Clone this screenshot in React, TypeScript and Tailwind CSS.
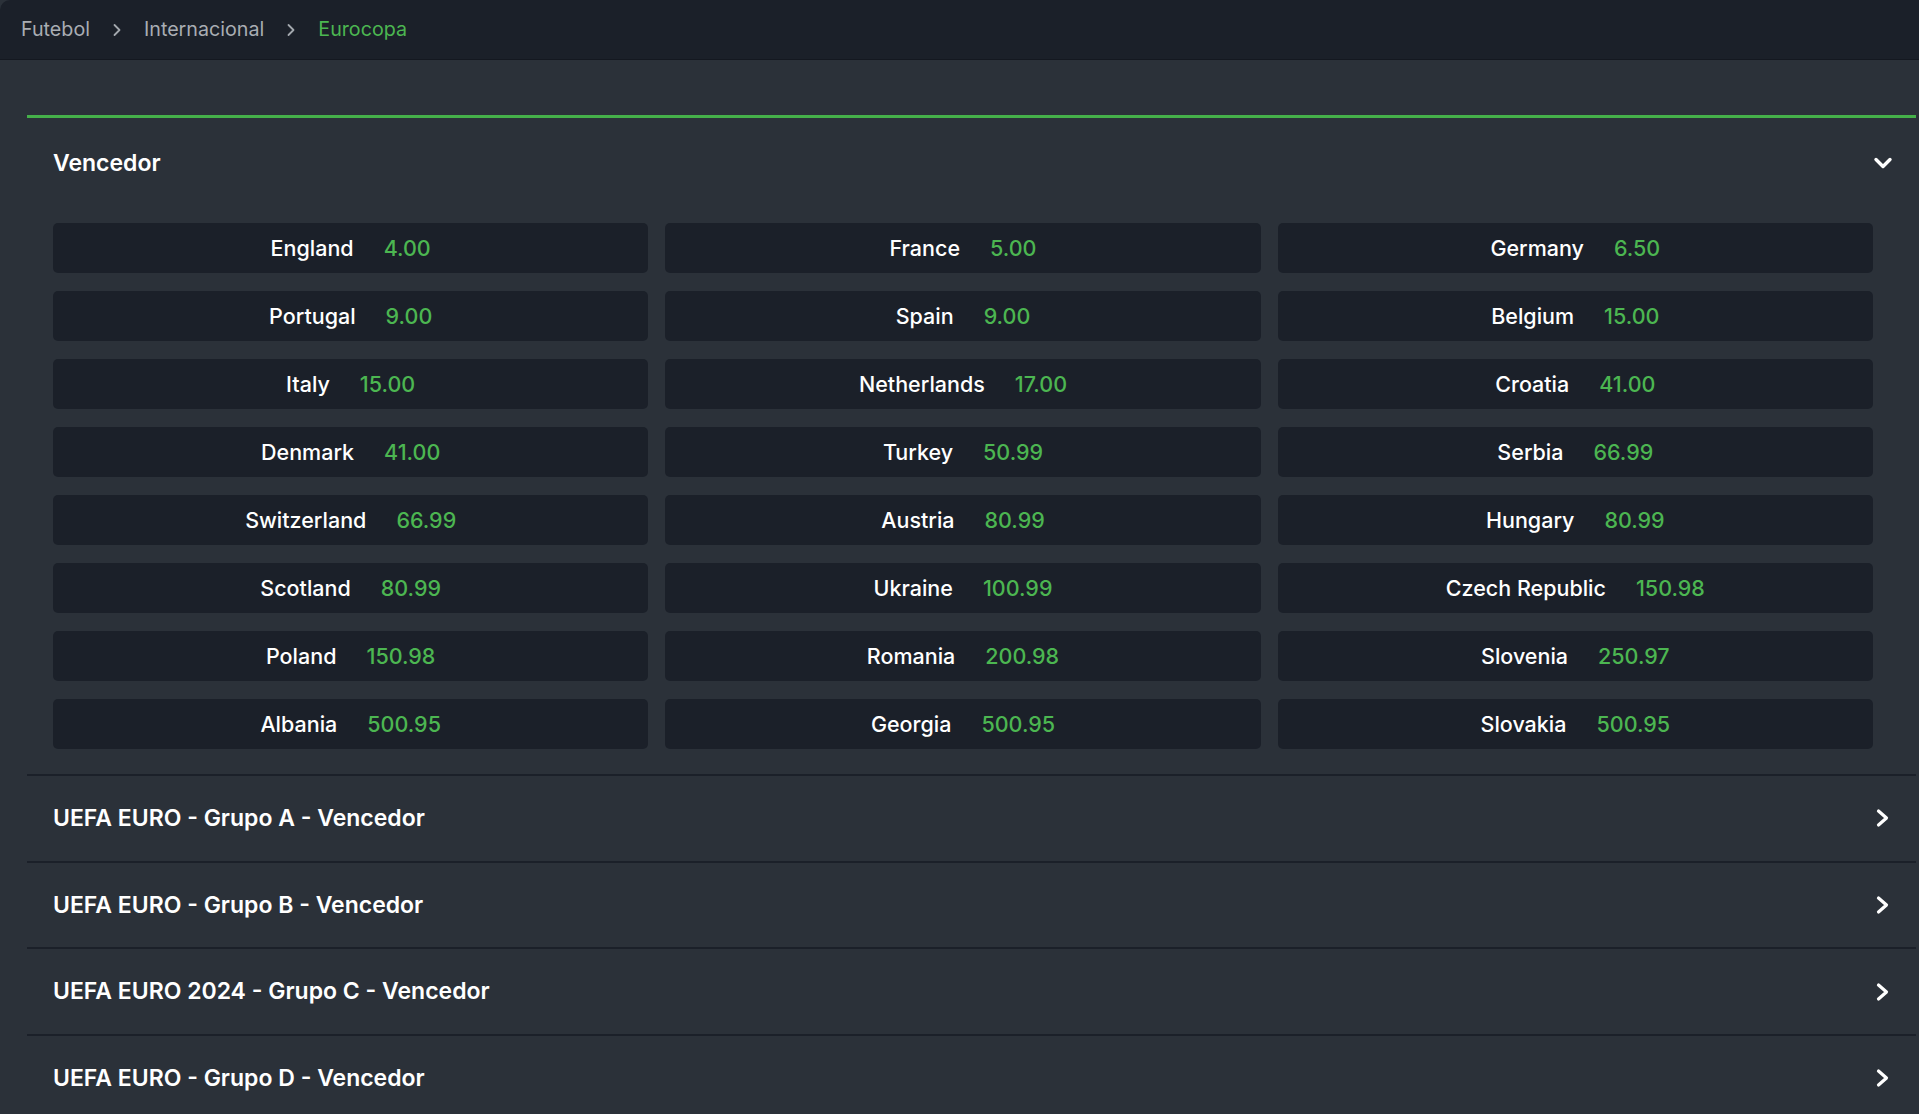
import React from "react";

const odds: [string, string][] = [
  ["England", "4.00"], ["France", "5.00"], ["Germany", "6.50"],
  ["Portugal", "9.00"], ["Spain", "9.00"], ["Belgium", "15.00"],
  ["Italy", "15.00"], ["Netherlands", "17.00"], ["Croatia", "41.00"],
  ["Denmark", "41.00"], ["Turkey", "50.99"], ["Serbia", "66.99"],
  ["Switzerland", "66.99"], ["Austria", "80.99"], ["Hungary", "80.99"],
  ["Scotland", "80.99"], ["Ukraine", "100.99"], ["Czech Republic", "150.98"],
  ["Poland", "150.98"], ["Romania", "200.98"], ["Slovenia", "250.97"],
  ["Albania", "500.95"], ["Georgia", "500.95"], ["Slovakia", "500.95"],
];

const groups = [
  "UEFA EURO - Grupo A - Vencedor",
  "UEFA EURO - Grupo B - Vencedor",
  "UEFA EURO 2024 - Grupo C - Vencedor",
  "UEFA EURO - Grupo D - Vencedor",
];

function CrumbChevron() {
  return (
    <svg width="10" height="14" viewBox="0 0 10 14" className="shrink-0">
      <polyline points="2.5,2 7.5,7 2.5,12" fill="none" stroke="#a3a8ae" strokeWidth="1.8" strokeLinecap="round" strokeLinejoin="round" />
    </svg>
  );
}

function ChevronRight() {
  return (
    <svg width="16" height="20" viewBox="0 0 16 20" className="shrink-0">
      <polyline points="3.5,3 11.5,10 3.5,17" fill="none" stroke="#ffffff" strokeWidth="3.2" strokeLinecap="round" strokeLinejoin="round" />
    </svg>
  );
}

function ChevronDown() {
  return (
    <svg width="20" height="14" viewBox="0 0 20 14" className="shrink-0">
      <polyline points="3,3.5 10,10.5 17,3.5" fill="none" stroke="#ffffff" strokeWidth="3.4" strokeLinecap="round" strokeLinejoin="round" />
    </svg>
  );
}

export default function App() {
  return (
    <div
      className="min-h-[1114px] w-full bg-[#2b3139] overflow-hidden"
      style={{ fontFamily: "Inter, 'Noto Sans', sans-serif" }}
    >
      <div className="h-[60px] bg-[#1b2029] border-b border-[#141820] rounded-tl-[10px] flex items-center pl-[21px] gap-[22px] text-[19.7px] text-[#a9adb3]">
        <span>Futebol</span>
        <CrumbChevron />
        <span>Internacional</span>
        <CrumbChevron />
        <span className="text-[#4cb651]">Eurocopa</span>
      </div>

      <div className="ml-[27px] mr-[3px] mt-[55px]">
        <div className="border-t-[3px] border-[#45b04a] shadow-[0_1px_0_#1b2029]">
          <div className="h-[90px] flex items-center justify-between pl-[26px] pr-[23px]">
            <span className="text-[23px] font-semibold text-white">Vencedor</span>
            <ChevronDown />
          </div>
          <div className="pl-[26px] pr-[43px] pt-[15px] pb-[25px] grid grid-cols-3 gap-x-[17px] gap-y-[18px]">
            {odds.map(([name, price]) => (
              <div
                key={name}
                className="h-[50px] rounded-[5px] bg-[#1b2029] flex items-center justify-center gap-[30px] text-[21.5px] font-medium"
              >
                <span className="text-white">{name}</span>
                <span className="text-[#4cb651]">{price}</span>
              </div>
            ))}
          </div>
        </div>

        {groups.map((g) => (
          <div
            key={g}
            className="border-t-2 border-[#1b2029] h-[86.7px] flex items-center justify-between pl-[26px] pr-[25px]"
          >
            <span className="text-[23px] font-semibold text-white">{g}</span>
            <ChevronRight />
          </div>
        ))}
      </div>
    </div>
  );
}
